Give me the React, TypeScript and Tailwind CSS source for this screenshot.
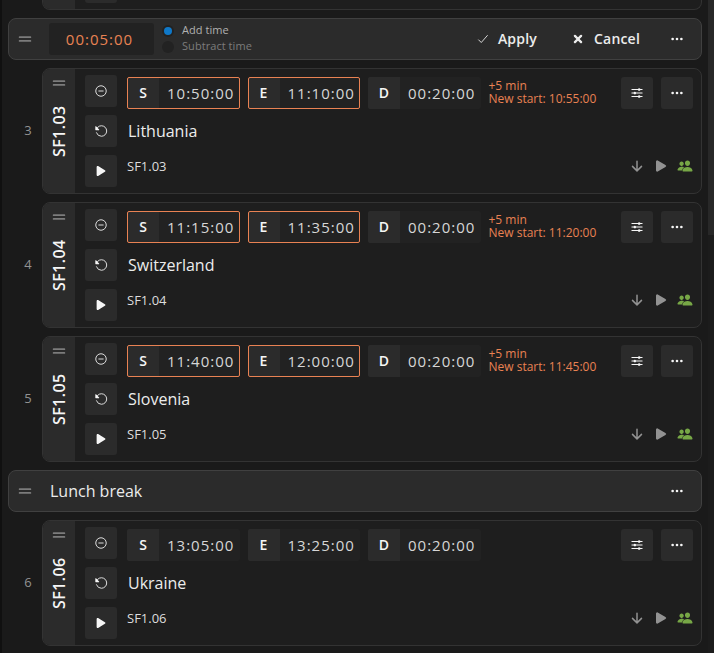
import React from 'react';
import {
  IoArrowDown,
  IoCheckmark,
  IoClose,
  IoEllipsisHorizontal,
  IoOptions,
  IoPeople,
  IoPlay,
  IoReload,
  IoRemoveCircleOutline,
  IoReorderTwo,
} from 'react-icons/io5';

type RundownEvent = {
  index: number;
  cue: string;
  title: string;
  start: string;
  end: string;
  duration: string;
  newStart?: string;
};

const morning: RundownEvent[] = [
  { index: 3, cue: 'SF1.03', title: 'Lithuania', start: '10:50:00', end: '11:10:00', duration: '00:20:00', newStart: '10:55:00' },
  { index: 4, cue: 'SF1.04', title: 'Switzerland', start: '11:15:00', end: '11:35:00', duration: '00:20:00', newStart: '11:20:00' },
  { index: 5, cue: 'SF1.05', title: 'Slovenia', start: '11:40:00', end: '12:00:00', duration: '00:20:00', newStart: '11:45:00' },
];

const afternoon: RundownEvent[] = [
  { index: 6, cue: 'SF1.06', title: 'Ukraine', start: '13:05:00', end: '13:25:00', duration: '00:20:00' },
];

function SquareButton({ children }: { children: React.ReactNode }) {
  return (
    <button className="flex size-8 shrink-0 items-center justify-center rounded-[3px] bg-[#2b2b2b] text-[#f6f6f6]">
      {children}
    </button>
  );
}

function TimeField({ label, value, delayed }: { label: string; value: string; delayed?: boolean }) {
  return (
    <div
      className={`flex h-8 w-[112.5px] rounded-[2px] bg-[#222222] ${delayed ? 'outline -outline-offset-1 outline-[#e98253]' : ''}`}
    >
      <span className="flex w-8 items-center justify-center rounded-l-[2px] bg-[#2b2b2b] pb-px text-[14px] font-semibold text-[#f6f6f6]">
        {label}
      </span>
      <span className="flex flex-1 items-center pl-2 pt-px text-[15px] tracking-[1px] text-[#d6d6d6]">{value}</span>
    </div>
  );
}

function EventCard({ event }: { event: RundownEvent }) {
  const delayed = event.newStart !== undefined;
  return (
    <div className="flex h-[126px]">
      <div className="flex w-[34px] items-center justify-center pl-[6px] text-[13px] text-[#929292]">{event.index}</div>
      <div className="flex flex-1 overflow-hidden rounded-lg border border-[#333333] bg-[#1e1e1e]">
        <div className="flex w-8 flex-col items-center bg-[#2b2b2b] pt-1">
          <IoReorderTwo className="size-5 text-[#7c7c7c]" />
          <span className="mt-[9px] flex h-[58px] w-8 rotate-180 items-center justify-center text-[16px] leading-8 font-semibold tracking-[0.4px] text-[#f6f6f6] [writing-mode:vertical-rl]">
            {event.cue}
          </span>
        </div>
        <div className="flex flex-col gap-2 pl-[10px] pt-[6px]">
          <SquareButton>
            <IoRemoveCircleOutline className="size-[14px]" />
          </SquareButton>
          <SquareButton>
            <IoReload className="size-[14px] -scale-x-100" />
          </SquareButton>
          <SquareButton>
            <IoPlay className="size-[14px]" />
          </SquareButton>
        </div>
        <div className="flex flex-1 flex-col pl-[10px] pr-2 pt-2">
          <div className="flex h-8 items-center">
            <div className="flex gap-2">
              <TimeField label="S" value={event.start} delayed={delayed} />
              <TimeField label="E" value={event.end} delayed={delayed} />
              <TimeField label="D" value={event.duration} />
            </div>
            {delayed && (
              <div className="ml-2 pb-[2px] text-[12px] leading-[13px] text-[#e98253]">
                <div>+5 min</div>
                <div>New start: {event.newStart}</div>
              </div>
            )}
            <div className="ml-auto flex gap-2">
              <SquareButton>
                <IoOptions className="size-[14px]" />
              </SquareButton>
              <SquareButton>
                <IoEllipsisHorizontal className="size-[14px]" />
              </SquareButton>
            </div>
          </div>
          <div className="mt-[10px] pl-px text-[16px] leading-6 text-[#ececec]">{event.title}</div>
          <div className="mt-[13px] flex h-5 items-center justify-between">
            <span className="pt-[2px] text-[13px] text-[#dddddd]">{event.cue}</span>
            <div className="flex items-center gap-2 text-[#929292]">
              <IoArrowDown className="size-4" />
              <IoPlay className="size-4" />
              <IoPeople className="size-4 text-[#77a746]" />
            </div>
          </div>
        </div>
      </div>
    </div>
  );
}

function Block({ children }: { children: React.ReactNode }) {
  return (
    <div className="flex h-[42px] items-center rounded-lg border border-[#404040] bg-[#2b2b2b] pl-[6px] pr-[17px]">
      <IoReorderTwo className="size-5 text-[#7c7c7c]" />
      {children}
      <IoEllipsisHorizontal className="size-[14px] text-[#f6f6f6]" />
    </div>
  );
}

export default function App() {
  return (
    <div className="flex h-[653px] w-[714px] overflow-hidden border-l-2 border-[#101010] bg-[#1a1a1a] font-['Open_Sans',sans-serif]">
      <div className="ml-[6px] flex w-[694px] shrink-0 flex-col gap-2">
        <div className="flex h-[10px] shrink-0 pl-[34px]">
          <div className="flex flex-1 overflow-hidden rounded-b-lg border border-t-0 border-[#333333] bg-[#1e1e1e]">
            <div className="w-8 bg-[#2b2b2b]" />
            <div className="ml-[10px] h-[3px] w-8 rounded-b-[3px] bg-[#2b2b2b]" />
          </div>
        </div>

        <Block>
          <div className="ml-[14px] flex h-8 w-[105px] items-center justify-center rounded-[3px] bg-[#222222] pr-1 pt-px text-[15px] tracking-[1px] text-[#e98253]">
            00:05:00
          </div>
          <div className="ml-2 flex flex-col pb-[2px] text-[11px] leading-4 tracking-[0.06px]">
            <label className="flex items-center gap-2 text-[#b1b1b1]">
              <span className="relative top-px flex size-3 items-center justify-center rounded-full bg-[#222222]">
                <span className="size-2 rounded-full bg-[#0f78c8]" />
              </span>
              Add time
            </label>
            <label className="flex items-center gap-2 text-[#7c7c7c]">
              <span className="relative top-px size-3 rounded-full bg-[#222222]" />
              Subtract time
            </label>
          </div>
          <div className="ml-auto mr-[30px] flex items-center pb-px text-[14px] font-semibold tracking-[0.2px] text-[#ececec]">
            <IoCheckmark className="mr-2 size-[14px]" />
            Apply
            <IoClose className="ml-[34px] mr-[9px] size-[14px] [&_path]:[stroke-width:38px]" />
            Cancel
          </div>
        </Block>

        {morning.map((event) => (
          <EventCard key={event.index} event={event} />
        ))}

        <Block>
          <span className="ml-[15px] flex-1 text-[16px] text-[#ececec]">Lunch break</span>
        </Block>

        {afternoon.map((event) => (
          <EventCard key={event.index} event={event} />
        ))}
      </div>
      <div className="ml-[6px] w-[6px] shrink-0 bg-[#1c1c1c]">
        <div className="h-[235px] bg-[#282828]" />
      </div>
    </div>
  );
}
